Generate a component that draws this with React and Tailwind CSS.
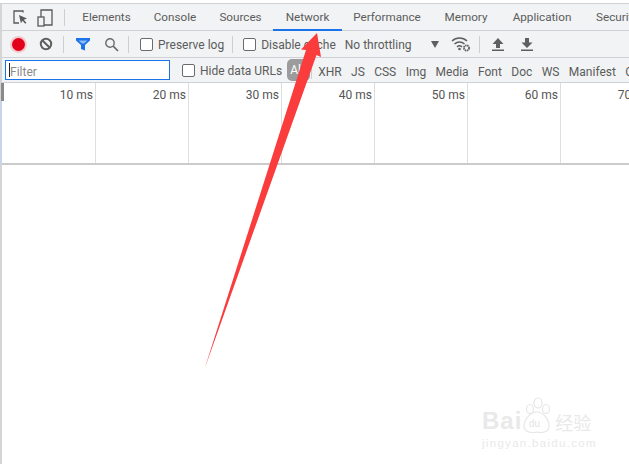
import React from "react";

const tabs = [
  { label: "Elements", width: "w-[71px]" },
  { label: "Console", width: "w-[66px]" },
  { label: "Sources", width: "w-[65px]" },
  { label: "Network", width: "w-[69px]" },
  { label: "Performance", width: "w-[90px]" },
  { label: "Memory", width: "w-[68px]" },
  { label: "Application", width: "w-[84px]" },
  { label: "Security", width: "w-[66px]" },
];
const filters = ["XHR", "JS", "CSS", "Img", "Media", "Font", "Doc", "WS", "Manifest", "Other"];
const ticks = ["10 ms", "20 ms", "30 ms", "40 ms", "50 ms", "60 ms", "70 ms"];

const Sep = ({ className = "" }) => <div className={`w-px h-[17px] bg-[#ccced1] shrink-0 ${className}`} />;

const Checkbox = ({ label, className = "" }) => (
  <div className={`flex items-center shrink-0 ${className}`}>
    <div className="w-[13px] h-[13px] rounded-[2px] border border-[#6b6b6b] bg-white mr-[5px]" />
    <span className="whitespace-nowrap pt-[2px]">{label}</span>
  </div>
);

const App = () => {
  return (
    <div className="relative w-[629px] h-[464px] overflow-hidden bg-white text-[12px] text-[#5c5c5c] font-['Roboto','Open_Sans',sans-serif]">
      <div className="h-[3px] bg-white" />
      <div className="border-l-2 border-[#d5d5d5] h-[461px] flex flex-col">
        {/* tabs */}
        <div className="h-[28px] bg-[#f1f3f4] border-y border-[#cfd1d4] flex items-center shrink-0">
          <svg width="62" height="26" viewBox="0 0 62 26" className="shrink-0" fill="none">
            <path d="M21 8.500V7h-9v12h5" stroke="#5a5a5a" strokeWidth="1.300" />
            <path d="M17 11l8 3.500-3.200 1.200 2.600 3-1.200 1-2.600-3-1.700 2.600z" fill="#5a5a5a" />
            <rect x="36" y="13" width="6" height="9" stroke="#5a5a5a" strokeWidth="1.300" />
            <path d="M39 13V6h11v15h-8" stroke="#5a5a5a" strokeWidth="1.300" />
          </svg>
          <Sep className="h-[16px]" />
          <div className="flex h-full ml-[6px] shrink-0">
            {tabs.map((t) => (
              <div
                key={t.label}
                className={`relative ${t.width} shrink-0 pt-[2px] h-full flex items-center justify-center whitespace-nowrap text-[11.7px]`}
              >
                {t.label}
                {t.label === "Network" && <div className="absolute left-0 right-0 bottom-[-1px] h-[2px] bg-[#1a73e8]" />}
              </div>
            ))}
          </div>
        </div>

        {/* toolbar */}
        <div className="h-[27px] bg-[#f1f3f4] border-b border-[#cfd1d4] flex items-center shrink-0">
          <div className="w-[13px] h-[13px] rounded-full bg-[#e3001b] ml-[10px] shadow-[0_0_0_2px_#f3c9cc] shrink-0" />
          <svg width="14" height="14" viewBox="0 0 14 14" className="ml-[14px] shrink-0" fill="none">
            <circle cx="7" cy="7" r="5.200" stroke="#5f5f5f" strokeWidth="2" />
            <path d="M3.200 3.200l7.600 7.600" stroke="#5f5f5f" strokeWidth="2" />
          </svg>
          <Sep className="ml-[10px]" />
          <svg width="14" height="14" viewBox="0 0 14 14" className="ml-[12px] shrink-0">
            <path d="M0 1h14v2.500L9 8v5.500l-4-1.500V8L0 3.500z" fill="#1a73e8" />
            <path d="M2.500 3.500h9L8 6.500H6z" fill="#8fbcf5" />
          </svg>
          <svg width="15" height="15" viewBox="0 0 15 15" className="ml-[14px] shrink-0" fill="none">
            <circle cx="6" cy="6" r="4.200" stroke="#6a6a6a" strokeWidth="1.400" />
            <path d="M9.200 9.200L14 14" stroke="#6a6a6a" strokeWidth="1.700" />
          </svg>
          <Sep className="ml-[9px]" />
          <Checkbox label="Preserve log" className="ml-[11px]" />
          <Sep className="ml-[8px]" />
          <Checkbox label="Disable cache" className="ml-[10px]" />
          <span className="ml-[9px] whitespace-nowrap shrink-0 pt-[2px]">No throttling</span>
          <div className="ml-[19px] shrink-0 w-0 h-0 border-x-[4px] border-x-transparent border-t-[7px] border-t-[#5f5f5f]" />
          <svg width="20" height="16" viewBox="0 0 20 16" className="ml-[12px] shrink-0" fill="none">
            <path d="M1 5a11 11 0 0 1 15 0M3.500 8a7.500 7.500 0 0 1 10 0M6 10.800a4 4 0 0 1 5 0" stroke="#5f5f5f" strokeWidth="1.500" />
            <circle cx="8.500" cy="13" r="1.300" fill="#5f5f5f" />
            <circle cx="15.500" cy="12" r="2.600" fill="none" stroke="#5f5f5f" strokeWidth="1.800" strokeDasharray="1.500 0.600" />
          </svg>
          <Sep className="ml-[8px]" />
          <svg width="12" height="13" viewBox="0 0 12 13" className="ml-[12px] shrink-0">
            <path d="M6 0l5.500 6H8v4H4V6H.5zM0 11.500h12V13H0z" fill="#5f5f5f" />
          </svg>
          <svg width="12" height="13" viewBox="0 0 12 13" className="ml-[17px] shrink-0">
            <path d="M4 0h4v4.500h3.500L6 10 .5 4.500H4zM0 11.500h12V13H0z" fill="#5f5f5f" />
          </svg>
        </div>

        {/* filter bar */}
        <div className="h-[25px] bg-[#f1f3f4] border-b border-[#cfd1d4] flex items-center shrink-0">
          <div className="ml-[3px] w-[165px] h-[20px] bg-white border border-[#1a73e8] flex items-center shrink-0">
            <div className="w-px h-[14px] bg-[#222] ml-[3px]" />
            <span className="text-[#8a8a8a] pt-[3px]">Filter</span>
          </div>
          <Checkbox label="Hide data URLs" className="ml-[12px]" />
          <div className="ml-[5px] w-[23px] h-[22px] rounded-[5px] bg-[#9c9c9c] text-white flex items-center pl-[3px] shrink-0">All</div>
          <Sep className="ml-[1px]" />
          <div className="flex ml-[6px] gap-[9.400px] whitespace-nowrap pt-[3px] shrink-0">
            {filters.map((f) => (
              <span key={f}>{f}</span>
            ))}
          </div>
        </div>

        {/* timeline */}
        <div className="relative h-[82px] flex border-b-2 border-[#cbcbcb] shrink-0 pl-px">
          <div className="absolute left-[-2px] top-[18px] bottom-[-2px] w-[2px] bg-[#c8d5e8]" />
          <div className="absolute left-[-1px] top-0 w-[3px] h-[18px] bg-[#8a8a8a]" />
          {ticks.map((t) => (
            <div key={t} className="w-[93px] shrink-0 border-r border-[#dedede] text-right pr-[2px] pt-[3px] text-[#555]">
              <span className="whitespace-nowrap">{t}</span>
            </div>
          ))}
        </div>
      </div>

      {/* red arrow annotation */}
      <svg className="absolute left-0 top-0 pointer-events-none" width="629" height="464" viewBox="0 0 629 464">
        <path d="M317 33L321 57 316.500 55 204.500 369 306 50 301 49.500z" fill="#fb3c3c" />
      </svg>

      {/* watermark */}
      <div className="absolute left-[482px] top-[395px] w-[130px] text-[#e9e9e9] select-none">
        <div className="flex items-end h-[40px]">
          <span className="text-[24px] leading-[28px] font-['Liberation_Sans',sans-serif] font-bold tracking-[1px]">Bai</span>
          <svg width="32" height="38" viewBox="0 0 32 38" className="shrink-0 -ml-px">
            <ellipse cx="9" cy="12" rx="3.500" ry="4.500" fill="none" stroke="#e6e6e6" strokeWidth="1.200" />
            <ellipse cx="17" cy="6" rx="4" ry="5" fill="none" stroke="#e6e6e6" strokeWidth="1.200" />
            <ellipse cx="25" cy="12" rx="3.500" ry="4.500" fill="none" stroke="#e6e6e6" strokeWidth="1.200" />
            <path d="M16 15c6 0 12 7 12 14 0 7-8 7-12 6-4 1-13 1-13-6 0-7 7-14 13-14z" fill="none" stroke="#e6e6e6" strokeWidth="1.200" />
            <text x="8" y="30" fontSize="10" fill="#e4e4e4" fontFamily="Liberation Sans">du</text>
          </svg>
          <span className="text-[18px] leading-[26px] ml-[2px] font-['Noto_Sans_CJK_SC',sans-serif]">经验</span>
        </div>
        <div className="text-[11.500px] leading-[14px] mt-[1px] tracking-[1.300px] font-['Liberation_Sans',sans-serif] whitespace-nowrap">jingyan.baidu.com</div>
      </div>
    </div>
  );
};

export default App;
